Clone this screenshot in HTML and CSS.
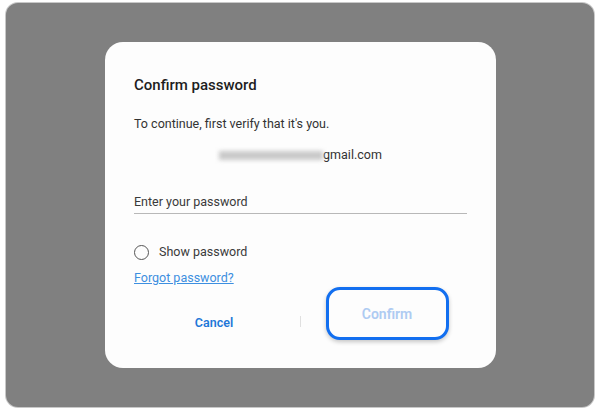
FILE: index.html
```html
<!DOCTYPE html>
<html>
<head>
<meta charset="utf-8">
<link rel="stylesheet" href="styles.css">
</head>
<body>
<div class="frame">
  <div class="dialog">
    <h1 class="title">Confirm password</h1>
    <p class="lead">To continue, first verify that it's you.</p>
    <div class="email"><span class="blur"></span><span>gmail.com</span></div>
    <div class="field">Enter your password</div>
    <label class="check"><span class="radio"></span><span>Show password</span></label>
    <a class="forgot">Forgot password?</a>
    <div class="footer">
      <span class="cancel">Cancel</span>
      <span class="divider"></span>
      <span class="confirm">Confirm</span>
    </div>
  </div>
</div>
</body>
</html>
```
FILE: styles.css
```css
* { box-sizing: border-box; }
html, body { margin: 0; background: #ffffff; }
body {
  width: 600px; height: 410px;
  font-family: Roboto, "Noto Sans", sans-serif;
  color: #252525;
  padding: 3px 6px;
}
.frame {
  height: 404px;
  background: #808080;
  border-radius: 12px;
  box-shadow: 0 0 0 1px #c8c8c8;
  padding: 39px 0 0 99px;
}
.dialog {
  width: 391px;
  height: 326px;
  background: #fdfdfd;
  border-radius: 18px;
  padding: 33px 29px 0 29px;
}
.title {
  margin: 0;
  font-size: 15px;
  line-height: 20px;
  font-weight: 500;
  color: #1e1e1e;
}
.lead {
  margin: 20px 0 0;
  font-size: 12.5px;
  line-height: 18px;
  color: #333;
}
.email {
  margin-top: 13px;
  display: flex;
  justify-content: center;
  align-items: center;
  font-size: 12.5px;
  line-height: 18px;
  color: #333;
}
.blur {
  width: 104px;
  height: 9px;
  background: #c9c9c9;
  filter: blur(2px);
}
.field {
  margin-top: 29px;
  font-size: 12.5px;
  line-height: 18px;
  color: #3a3a3a;
  padding-bottom: 2px;
  border-bottom: 1.5px solid #b8b8b8;
}
.check {
  margin-top: 29px;
  display: flex;
  align-items: center;
  gap: 10px;
  font-size: 12.5px;
  line-height: 18px;
  color: #3a3a3a;
}
.radio {
  width: 15px; height: 15px;
  border: 1.6px solid #555;
  border-radius: 50%;
}
.forgot {
  display: inline-block;
  margin-top: 8px;
  font-size: 12.5px;
  line-height: 18px;
  color: #3d8fe0;
  text-decoration: underline;
}
.footer {
  margin-top: 0;
  display: grid;
  grid-template-columns: 166px 1px 1fr;
  align-items: start;
}
.cancel {
  justify-self: center;
  margin-top: 27px;
  margin-left: -6px;
  font-size: 12.5px;
  line-height: 18px;
  font-weight: 600;
  color: #1f77d8;
}
.divider {
  margin-top: 29px;
  height: 11px;
  background: #e0e0e0;
}
.confirm {
  justify-self: center;
  margin-left: 6px;
  width: 123px;
  height: 53px;
  border: 3.5px solid #126ff0;
  border-radius: 14px;
  box-shadow: 0 2px 4px rgba(0,0,0,0.22);
  display: flex;
  align-items: center;
  justify-content: center;
  font-size: 14px;
  font-weight: 600;
  color: #aecbf2;
  background: #fdfdfd;
}
```
